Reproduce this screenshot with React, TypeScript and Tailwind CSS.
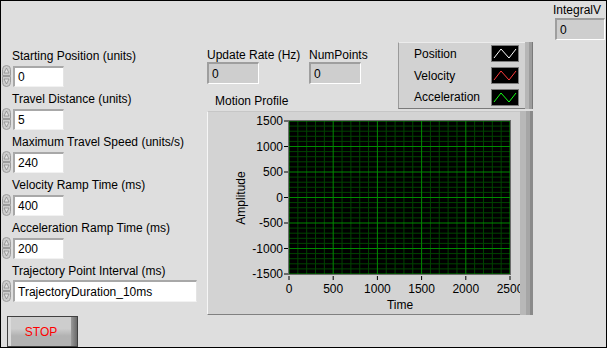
import type { ReactNode } from 'react';

const PLOT = { x: 81, y: 9, w: 221, h: 153 };

function Spinner() {
  return (
    <svg width="9" height="22" viewBox="0 0 9 22" className="shrink-0">
      <path d="M0.5 10.5 V4.5 A4 4 0 0 1 8.5 4.5 V10.5 Z" fill="#cdcdcd" stroke="#9c9c9c" />
      <path d="M4.5 3 L7 8 L2 8 Z" fill="#e4e4e4" stroke="#8a8a8a" strokeWidth="0.8" />
      <path d="M0.5 11.5 H8.5 V17.5 A4 4 0 0 1 0.5 17.5 Z" fill="#cdcdcd" stroke="#9c9c9c" />
      <path d="M4.5 19 L7 14 L2 14 Z" fill="#e4e4e4" stroke="#8a8a8a" strokeWidth="0.8" />
    </svg>
  );
}

function NumControl({ label, value, wide }: { label: string; value: string; wide?: boolean }) {
  return (
    <div className="flex flex-col mb-[5px]">
      <div className="pl-[10px] h-[14px] whitespace-nowrap">{label}</div>
      <div className="flex items-center mt-[2px] h-[22px]">
        <Spinner />
        <div
          className={`ml-[2px] ${wide ? 'w-[184px] h-[22px]' : 'w-[51px] h-[21px]'} bg-white flex items-center pl-[3px] border-t-2 border-l-2 border-b border-r border-t-[#a8a8a8] border-l-[#a8a8a8] border-b-[#f2f2f2] border-r-[#e4e4e4]`}
        >
          {value}
        </div>
      </div>
    </div>
  );
}

function Indicator({ label, width, children }: { label: string; width: string; children?: ReactNode }) {
  return (
    <div className={`flex flex-col ${width}`}>
      <div className="h-[14px] whitespace-nowrap">{label}</div>
      <div className="w-[52px] h-[22px] bg-[#cecece] flex items-center pl-[3px] border-t-2 border-l-2 border-b border-r border-t-[#9e9e9e] border-l-[#9e9e9e] border-b-white border-r-white">
        0
      </div>
      {children}
    </div>
  );
}

function Swatch({ color }: { color: string }) {
  return (
    <svg width="28" height="17" viewBox="0 0 28 17">
      <rect x="0.5" y="0.5" width="27" height="16" fill="#000" stroke="#7c7c7c" />
      <polyline points="3,13 10,4 18,13 25,4" fill="none" stroke={color} strokeWidth="1" />
    </svg>
  );
}

function Legend() {
  const items = [
    { name: 'Position', color: '#ffffff' },
    { name: 'Velocity', color: '#ff3a3a' },
    { name: 'Acceleration', color: '#16ff16' },
  ];
  return (
    <div className="mt-[41px] w-[135px] h-[67px] flex">
      <div className="flex-1 bg-[#d2d2d2] border-l border-t border-b border-l-[#9a9a9a] border-t-[#ececec] border-b-[#7a7a7a] flex flex-col">
        {items.map((it) => (
          <div key={it.name} className="h-[22px] flex items-center justify-between pl-[15px] pr-[6px]">
            <span>{it.name}</span>
            <Swatch color={it.color} />
          </div>
        ))}
      </div>
      <div className="w-[4px] bg-[#b6b6b6]" />
      <div className="w-[3px] bg-[#9c9c9c]" />
      <div className="w-[1px] bg-[#7a7a7a]" />
    </div>
  );
}

function Chart() {
  const minorX = Array.from({ length: 26 }, (_, i) => PLOT.x + (i * PLOT.w) / 25);
  const minorY = Array.from({ length: 31 }, (_, i) => PLOT.y + (i * PLOT.h) / 30);
  const yLabels = ['1500', '1000', '500', '0', '-500', '-1000', '-1500'];
  const xLabels = ['0', '500', '1000', '1500', '2000', '2500'];

  return (
    <svg width="312" height="202" viewBox="0 0 312 202" className="overflow-visible" fontSize="12">
      <rect x={PLOT.x} y={PLOT.y} width={PLOT.w} height={PLOT.h} fill="#000" />
      {minorX.map((x, i) =>
        i % 5 === 0 ? null : (
          <line key={`mx${i}`} x1={x} y1={PLOT.y} x2={x} y2={PLOT.y + PLOT.h} stroke="#004400" />
        ),
      )}
      {minorY.map((y, i) =>
        i % 5 === 0 ? null : (
          <line key={`my${i}`} x1={PLOT.x} y1={y} x2={PLOT.x + PLOT.w} y2={y} stroke="#004400" />
        ),
      )}
      {minorX.map((x, i) =>
        i % 5 === 0 ? (
          <line key={`Mx${i}`} x1={x} y1={PLOT.y} x2={x} y2={PLOT.y + PLOT.h} stroke="#008a00" />
        ) : null,
      )}
      {minorY.map((y, i) =>
        i % 5 === 0 ? (
          <line key={`My${i}`} x1={PLOT.x} y1={y} x2={PLOT.x + PLOT.w} y2={y} stroke="#008a00" />
        ) : null,
      )}
      <rect x={PLOT.x - 0.5} y={PLOT.y - 0.5} width={PLOT.w + 1} height={PLOT.h + 1} fill="none" stroke="#6a6a6a" />

      {yLabels.map((t, i) => {
        const y = PLOT.y + (i * PLOT.h) / 6;
        return (
          <g key={t}>
            <line x1={PLOT.x - 5} y1={y} x2={PLOT.x - 1} y2={y} stroke="#000" />
            <text x={PLOT.x - 6} y={y} textAnchor="end" dominantBaseline="central" fill="#000">
              {t}
            </text>
          </g>
        );
      })}
      {xLabels.map((t, i) => {
        const x = PLOT.x + (i * PLOT.w) / 5;
        return (
          <g key={t}>
            <line x1={x} y1={PLOT.y + PLOT.h + 2} x2={x} y2={PLOT.y + PLOT.h + 6} stroke="#000" />
            <text x={x} y={177} textAnchor="middle" dominantBaseline="central" fill="#000">
              {t}
            </text>
          </g>
        );
      })}
      <text x={192} y={193} textAnchor="middle" dominantBaseline="central" fill="#000">
        Time
      </text>
      <text
        x={33}
        y={86}
        textAnchor="middle"
        dominantBaseline="central"
        fill="#000"
        transform="rotate(-90 33 86)"
      >
        Amplitude
      </text>
    </svg>
  );
}

export default function App() {
  return (
    <div className="w-[607px] h-[348px] box-border border border-black bg-[#dedede] flex overflow-hidden text-[12px] leading-[14px] text-black font-['Liberation_Sans',Arial,sans-serif]">
      {/* controls */}
      <div className="w-[206px] shrink-0 flex flex-col pt-[48px] pl-[1px]">
        <NumControl label="Starting Position (units)" value="0" />
        <NumControl label="Travel Distance (units)" value="5" />
        <NumControl label="Maximum Travel Speed (units/s)" value="240" />
        <NumControl label="Velocity Ramp Time (ms)" value="400" />
        <NumControl label="Acceleration Ramp Time (ms)" value="200" />
        <NumControl label="Trajectory Point Interval (ms)" value="TrajectoryDuration_10ms" wide />

        <div className="ml-[5px] mt-[9px] w-[71px] h-[31px] border border-[#404040] flex">
          <div className="w-[3px] bg-[#dcdcdc]" />
          <div className="flex-1 flex items-center justify-center bg-gradient-to-b from-[#cdcdcd] from-40% to-[#b2b2b2] to-65% text-[#ff0000] text-[12px]">
            STOP
          </div>
          <div className="w-[6px] bg-gradient-to-r from-[#9a9a9a] to-[#6a6a6a]" />
        </div>
      </div>

      {/* indicators + graph */}
      <div className="flex-1 flex flex-col">
        <div className="h-[110px] flex">
          <div className="w-[191px] flex flex-col pt-[47px]">
            <div className="flex">
              <Indicator label="Update Rate (Hz)" width="w-[102px]" />
              <Indicator label="NumPoints" width="w-[89px]" />
            </div>
            <div className="ml-[8px] mt-[10px] h-[14px]">Motion Profile</div>
          </div>
          <Legend />
          <div className="w-[20px]" />
          <div className="w-[53px] flex flex-col pt-[2px]">
            <div className="h-[14px]">IntegralV</div>
            <div className="ml-[2px] mt-[1px] w-[50px] h-[22px] bg-[#cecece] flex items-center pl-[3px] border-t-2 border-l-2 border-b border-r border-t-[#9e9e9e] border-l-[#9e9e9e] border-b-white border-r-white">
              0
            </div>
          </div>
        </div>

        <div className="w-[326px] h-[204px] flex">
          <div className="w-[313px] h-full bg-[#d3d3d3] border-t border-l border-b border-t-[#c6c6c6] border-l-[#f6f6f6] border-b-[#808080]">
            <Chart />
          </div>
          <div className="w-[6px] bg-[#b8b8b8]" />
          <div className="w-[4px] bg-[#a6a6a6]" />
          <div className="w-[3px] bg-[#8a8a8a]" />
        </div>
      </div>
    </div>
  );
}
